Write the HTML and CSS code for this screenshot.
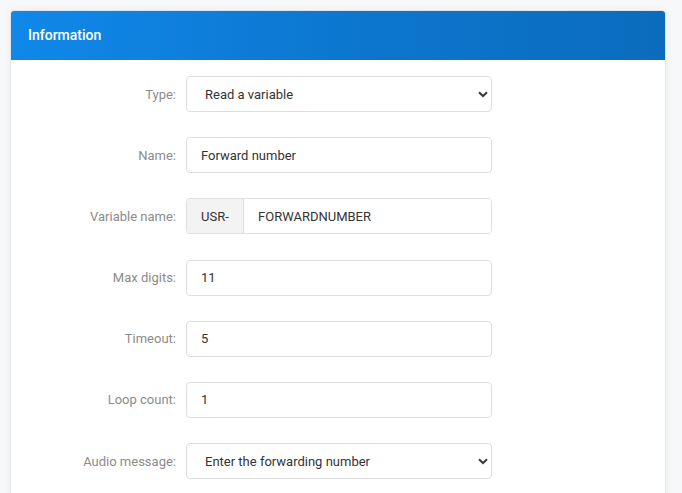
FILE: index.html
```html
<!DOCTYPE html>
<html>
<head>
<meta charset="utf-8">
<link rel="stylesheet" href="styles.css">
</head>
<body>
<div class="card">
  <div class="card-header">Information</div>
  <div class="card-body">
    <form class="form">
      <label class="label">Type:</label>
      <div class="select-wrap">
        <select class="control select"><option>Read a variable</option></select>
        <svg class="chev" width="10" height="7" viewBox="0 0 10 7"><path d="M1 1.2 L5 5 L9 1.2" fill="none" stroke="#343a40" stroke-width="2"/></svg>
      </div>

      <label class="label">Name:</label>
      <input class="control" type="text" value="Forward number">

      <label class="label">Variable name:</label>
      <div class="group">
        <span class="addon">USR-</span>
        <input class="control group-input" type="text" value="FORWARDNUMBER">
      </div>

      <label class="label">Max digits:</label>
      <input class="control" type="text" value="11">

      <label class="label">Timeout:</label>
      <input class="control" type="text" value="5">

      <label class="label">Loop count:</label>
      <input class="control" type="text" value="1">

      <label class="label">Audio message:</label>
      <div class="select-wrap">
        <select class="control select"><option>Enter the forwarding number</option></select>
        <svg class="chev" width="10" height="7" viewBox="0 0 10 7"><path d="M1 1.2 L5 5 L9 1.2" fill="none" stroke="#343a40" stroke-width="2"/></svg>
      </div>
    </form>
  </div>
</div>
</body>
</html>
```
FILE: styles.css
```css
* { box-sizing: border-box; }
html, body { margin: 0; }
body {
  background: #f7f8fa;
  padding: 10px 16px 0 10px;
  font-family: Roboto, "Liberation Sans", sans-serif;
  font-size: 13px;
  color: #333;
  height: 493px;
  overflow: hidden;
}
.card {
  width: 656px;
  background: #fff;
  border: 1px solid #e3e5e8;
  border-radius: 4px;
  box-shadow: 0 0 8px rgba(0,0,0,0.05);
  overflow: hidden;
}
.card-header {
  height: 49px;
  background: linear-gradient(90deg, #1088e9 0%, #0c77d0 50%, #0b6cbc 100%);
  color: #fff;
  font-weight: 500;
  font-size: 14px;
  padding-left: 17px;
  padding-bottom: 2px;
  display: flex;
  align-items: center;
}
.card-body {
  padding: 16px 0 20px;
}
.form {
  display: grid;
  grid-template-columns: 165px 306px;
  column-gap: 10px;
  row-gap: 25.2px;
  margin: 0;
}
.label {
  text-align: right;
  color: #8b8b8b;
  align-self: center;
}
.control {
  width: 100%;
  height: 36px;
  border: 1px solid #dedede;
  border-radius: 4px;
  background: #fff;
  font-family: inherit;
  font-size: 13px;
  color: #333;
  padding: 0 14px;
  outline: none;
}
.select-wrap { position: relative; }
.select {
  appearance: none;
  -webkit-appearance: none;
  padding-left: 18px;
}
.chev {
  position: absolute;
  right: 4px;
  top: 15px;
  pointer-events: none;
}
.group {
  display: flex;
  height: 36px;
  border: 1px solid #dedede;
  border-radius: 4px;
  overflow: hidden;
}
.addon {
  width: 57px;
  background: #f3f3f3;
  border-right: 1px solid #dedede;
  display: flex;
  align-items: center;
  padding-left: 14px;
  color: #333;
}
.group-input {
  border: none;
  border-radius: 0;
  height: 34px;
  flex: 1;
}
```
